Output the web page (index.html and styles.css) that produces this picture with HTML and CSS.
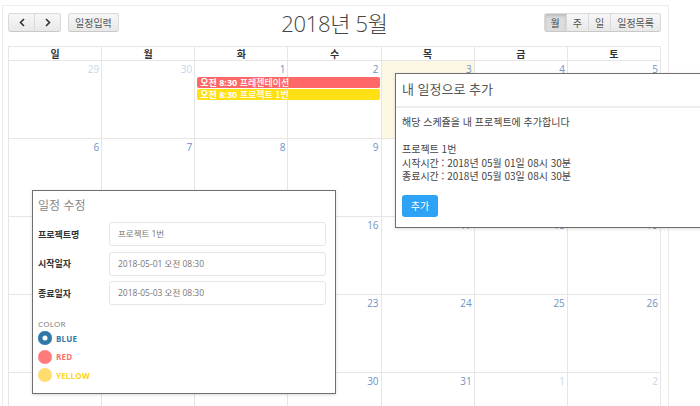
FILE: index.html
```html
<!DOCTYPE html>
<html lang="ko">
<head>
<meta charset="utf-8">
<title>캘린더</title>
<link rel="stylesheet" href="styles.css">
</head>
<body>
<div class="page">
  <div class="cal">
    <div class="toolbar">
      <div class="tb-left">
        <div class="btn-group">
          <button class="btn icon"><svg width="8" height="9" viewBox="0 0 8 9"><path d="M6 1 L2.5 4.5 L6 8" fill="none" stroke="#333" stroke-width="1.6"/></svg></button>
          <button class="btn icon"><svg width="8" height="9" viewBox="0 0 8 9"><path d="M2 1 L5.5 4.5 L2 8" fill="none" stroke="#333" stroke-width="1.6"/></svg></button>
        </div>
        <button class="btn">일정입력</button>
      </div>
      <h2 class="title">2018년 5월</h2>
      <div class="tb-right">
        <div class="btn-group">
          <button class="btn active">월</button>
          <button class="btn">주</button>
          <button class="btn">일</button>
          <button class="btn">일정목록</button>
        </div>
      </div>
    </div>

    <div class="grid">
      <div class="head">
        <div>일</div><div>월</div><div>화</div><div>수</div><div>목</div><div>금</div><div>토</div>
      </div>

      <div class="week">
        <div class="cell c1 other">29</div>
        <div class="cell c2 other">30</div>
        <div class="cell c3">1</div>
        <div class="cell c4">2</div>
        <div class="cell c5 today">3</div>
        <div class="cell c6">4</div>
        <div class="cell c7">5</div>
        <div class="event red"><b>오전 8:30</b> 프레젠테이션</div>
        <div class="event yellow"><b>오전 8:30</b> 프로젝트 1번</div>
      </div>

      <div class="week">
        <div class="cell c1">6</div>
        <div class="cell c2">7</div>
        <div class="cell c3">8</div>
        <div class="cell c4">9</div>
        <div class="cell c5">10</div>
        <div class="cell c6">11</div>
        <div class="cell c7">12</div>
      </div>

      <div class="week">
        <div class="cell c1">13</div>
        <div class="cell c2">14</div>
        <div class="cell c3">15</div>
        <div class="cell c4">16</div>
        <div class="cell c5">17</div>
        <div class="cell c6">18</div>
        <div class="cell c7">19</div>
      </div>

      <div class="week">
        <div class="cell c1">20</div>
        <div class="cell c2">21</div>
        <div class="cell c3">22</div>
        <div class="cell c4">23</div>
        <div class="cell c5">24</div>
        <div class="cell c6">25</div>
        <div class="cell c7">26</div>
      </div>

      <div class="week">
        <div class="cell c1">27</div>
        <div class="cell c2">28</div>
        <div class="cell c3">29</div>
        <div class="cell c4">30</div>
        <div class="cell c5">31</div>
        <div class="cell c6 other">1</div>
        <div class="cell c7 other">2</div>
      </div>
    </div>
  </div>

  <div class="modal add">
    <div class="modal-head">내 일정으로 추가</div>
    <div class="modal-body">
      <p>해당 스케쥴을 내 프로젝트에 추가합니다</p>
      <p class="gap">프로젝트 1번<br>시작시간 : 2018년 05월 01일 08시 30분<br>종료시간 : 2018년 05월 03일 08시 30분</p>
      <button class="btn-primary">추가</button>
    </div>
  </div>

  <div class="modal edit">
    <div class="edit-title">일정 수정</div>
    <div class="form">
      <div class="row"><label>프로젝트명</label><div class="input">프로젝트 1번</div></div>
      <div class="row"><label>시작일자</label><div class="input">2018-05-01 오전 08:30</div></div>
      <div class="row"><label>종료일자</label><div class="input">2018-05-03 오전 08:30</div></div>
    </div>
    <div class="colors">
      <div class="color-label">COLOR</div>
      <div class="radio blue"><span class="dot"></span>BLUE</div>
      <div class="radio red"><span class="dot"></span>RED</div>
      <div class="radio yellow"><span class="dot"></span>YELLOW</div>
    </div>
  </div>
</div>
</body>
</html>
```

FILE: styles.css
```css
* { box-sizing: border-box; }
html, body { margin: 0; padding: 0; background: #fff; }
body {
  font-family: "Open Sans", "Noto Sans CJK KR", sans-serif;
  color: #333;
  width: 700px;
  height: 406px;
  overflow: hidden;
}
.page {
  position: relative;
  width: 700px;
  height: 406px;
  padding: 5px 0 0 2px;
}

.cal {
  width: 667px;
  border: 1px solid #ececec;
  padding: 7px 7px 0 5px;
}

.toolbar {
  display: grid;
  grid-template-columns: 1fr auto 1fr;
  align-items: start;
  height: 33px;
}
.tb-left { display: flex; gap: 7px; }
.tb-right { display: flex; justify-content: flex-end; }
.btn-group { display: flex; }
.btn {
  height: 19px;
  padding: 0 6px;
  font-family: "Noto Sans CJK KR", sans-serif;
  font-size: 10px;
  color: #555;
  background: linear-gradient(#f7f7f7, #e8e8e8);
  border: 1px solid #d9d9d9;
  border-bottom-color: #c8c8c8;
  border-radius: 3px;
  display: flex;
  align-items: center;
  justify-content: center;
  line-height: 1;
}
.btn.icon { width: 27px; padding: 0; }
.btn-group .btn { border-radius: 0; margin-left: -1px; }
.btn-group .btn:first-child { border-radius: 3px 0 0 3px; margin-left: 0; }
.btn-group .btn:last-child { border-radius: 0 3px 3px 0; }
.btn.active {
  background: #dcdcdc;
  box-shadow: inset 0 2px 3px rgba(0,0,0,.15);
  color: #444;
}

.title {
  margin: 0;
  font-size: 22px;
  line-height: 20px;
  font-weight: 300;
  color: #444;
  letter-spacing: -0.3px;
}

.grid {
  border-left: 1px solid #e6e6e6;
  border-top: 1px solid #e6e6e6;
}
.head {
  display: grid;
  grid-template-columns: repeat(7, 1fr);
}
.head div {
  height: 14px;
  line-height: 13px;
  text-align: center;
  font-family: "Noto Sans CJK KR", sans-serif;
  font-weight: 700;
  font-size: 10px;
  color: #333;
  border-right: 1px solid #e6e6e6;
  border-bottom: 1px solid #e6e6e6;
}

.week {
  display: grid;
  grid-template-columns: repeat(7, 1fr);
  grid-template-rows: 16px 12px 12px 1fr;
  height: 78px;
}
.cell {
  grid-row: 1 / -1;
  border-right: 1px solid #e6e6e6;
  border-bottom: 1px solid #e6e6e6;
  text-align: right;
  padding: 2px 2px 0 0;
  font-size: 10px;
  line-height: 13px;
  color: #6f93c6;
}
.cell.other { color: #c8d7ea; }
.cell.today { background: #fcf8e3; }
.c1 { grid-column: 1; } .c2 { grid-column: 2; } .c3 { grid-column: 3; }
.c4 { grid-column: 4; } .c5 { grid-column: 5; } .c6 { grid-column: 6; } .c7 { grid-column: 7; }

.event {
  grid-column: 3 / 5;
  margin: 0 2px 0 2px;
  height: 11px;
  border-radius: 2px;
  color: #fff;
  font-family: "Noto Sans CJK KR", sans-serif;
  font-size: 9px;
  font-weight: 500;
  line-height: 11px;
  padding-left: 3px;
  white-space: nowrap;
}
.event b { font-family: "Open Sans", "Noto Sans CJK KR", sans-serif; font-weight: 700; }
.event.red { grid-row: 2; background: #ff6868; }
.event.yellow { grid-row: 3; background: #ffe014; }

.modal {
  position: absolute;
  background: #fff;
  border: 1px solid #6f6f6f;
  box-shadow: 0 1px 3px rgba(0,0,0,.15);
}
.add {
  left: 395px;
  top: 73px;
  width: 330px;
  height: 155px;
}
.modal-head {
  height: 34px;
  border-bottom: 2px solid #eeeeee;
  padding: 0 6px;
  font-family: "Noto Sans CJK KR", sans-serif;
  font-size: 13px;
  line-height: 30px;
  color: #555;
}
.modal-body {
  padding: 7px 6px;
  font-family: "Noto Sans CJK KR", sans-serif;
  font-size: 10px;
  line-height: 13.5px;
  color: #444;
}
.modal-body p { margin: 0; }
.modal-body p.gap { margin-top: 13.5px; }
.btn-primary {
  margin-top: 12px;
  width: 36px;
  height: 22px;
  border: 0;
  border-radius: 3px;
  background: #2ea3f6;
  color: #fff;
  font-family: "Noto Sans CJK KR", sans-serif;
  font-size: 10px;
  padding: 0;
  display: block;
}

.edit {
  left: 32px;
  top: 190px;
  width: 304px;
  height: 204px;
  padding: 0 9px 0 5px;
}
.edit-title {
  font-family: "Noto Sans CJK KR", sans-serif;
  font-size: 12px;
  color: #888;
  height: 31px;
  line-height: 27px;
}
.form { display: flex; flex-direction: column; gap: 5.5px; }
.row { display: flex; align-items: center; }
.row label {
  width: 71px;
  font-family: "Noto Sans CJK KR", sans-serif;
  font-weight: 700;
  font-size: 9px;
  color: #333;
}
.input {
  flex: 1;
  height: 24px;
  border: 1px solid #e6e6e6;
  border-radius: 3px;
  padding: 0 8px;
  font-size: 8.5px;
  line-height: 22px;
  color: #777;
  font-family: "Open Sans", "Noto Sans CJK KR", sans-serif;
}

.colors { margin-top: 13px; }
.color-label {
  font-size: 8px;
  color: #777;
  line-height: 11px;
  letter-spacing: 0.2px;
}
.radio {
  display: flex;
  align-items: center;
  gap: 4px;
  height: 18.5px;
  font-size: 8px;
  font-weight: 700;
  letter-spacing: 0.2px;
}
.dot {
  width: 14px;
  height: 14px;
  border-radius: 50%;
  display: inline-block;
  flex: none;
}
.radio.blue { color: #347aaa; }
.radio.blue .dot { background: #2f79a9; box-shadow: inset 0 0 0 4.5px #2f79a9, inset 0 0 0 14px #fff; }
.radio.red { color: #ff6f6f; }
.radio.red .dot { background: #ff7a7a; }
.radio.yellow { color: #ffd423; }
.radio.yellow .dot { background: #ffdc6e; }
```
